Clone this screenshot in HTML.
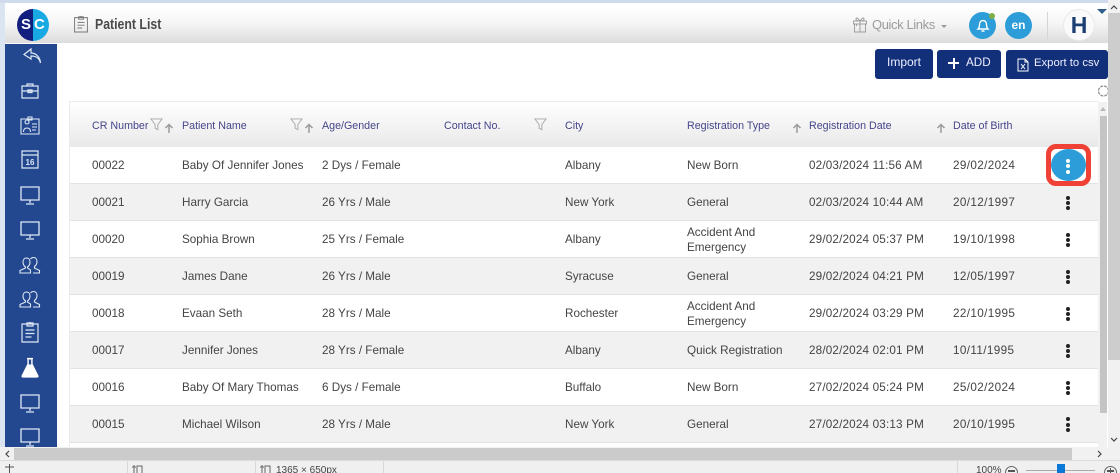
<!DOCTYPE html>
<html lang="en">
<head>
<meta charset="utf-8">
<title>Patient List</title>
<style>
html,body{margin:0;padding:0;width:1120px;height:473px;overflow:hidden;background:#fff}
body{position:relative;font-family:"Liberation Sans",sans-serif;font-size:11.7px;color:#444}
div,span,svg{position:absolute}
.t{white-space:nowrap;line-height:14px}
.c{margin-top:1px}
.a{letter-spacing:.38px}
.b{letter-spacing:.17px}
.h{color:#45458a;font-size:10.7px;line-height:14px;white-space:nowrap;top:119px}
.row{left:70px;width:1028px;height:36px;border-bottom:1px solid #e2e2e2}
.g{background:#f1f1f1}
.btn{background:#12307a;border-radius:3px;color:#eef;font-size:12px;line-height:14px;white-space:nowrap}
.d{width:4px;height:4px;border-radius:50%;background:#222;left:1066px}
.st{color:#444;font-size:10px;line-height:12px;white-space:nowrap}
</style>
</head>
<body>
<svg width="0" height="0" style="left:0;top:0">
<defs>
<symbol id="mon" viewBox="0 0 22 22"><path d="M2 3h18v13H2zM11 16v3M7 20h8" fill="none" stroke="#dfe8f5" stroke-width="1.3"/></symbol>
<symbol id="ppl" viewBox="0 0 22 22"><path d="M6.500 13c-1.500-1-2.500-3-2.500-5 0-2.500 1.500-4 3.500-4s3.500 1.500 3.500 4c0 2-1 4-2.500 5v1l3 2v3H1v-2.500l5.500-2.500zM11.500 5c.8-1 1.800-1.500 3-1.500 2 0 3.500 1.500 3.500 4 0 2-1 4-2.500 5v1.500l5 2.500v2.500H14" fill="none" stroke="#dfe8f5" stroke-width="1.1"/></symbol>
<symbol id="clip" viewBox="0 0 20 24"><path d="M2 4h16v18H2zM7 4V3h2.200a1 1 0 0 1 1.600 0H13v3H7zM5.500 10h9M5.500 13.500h9M5.500 17h6" fill="none" stroke="currentColor" stroke-width="1.2"/></symbol>
<symbol id="fil" viewBox="0 0 14 14"><path d="M1 1h12L8.500 7v5.500l-3-1.500V7z" fill="none" stroke="#a8a8a8" stroke-width="1"/></symbol>
<symbol id="up" viewBox="0 0 10 10"><path d="M5 10V2M1.500 5L5 1.500 8.500 5" fill="none" stroke="#9b9b9b" stroke-width="1.500"/></symbol>
</defs>
</svg>

<!-- window frame -->
<div style="left:0;top:0;width:1120px;height:3px;background:#cfdaea"></div>
<div style="left:0;top:3px;width:5px;height:444px;background:#dbe5f1"></div>

<!-- top bar -->
<div style="left:5px;top:6px;width:1103px;height:37px;background:linear-gradient(#fff 0%,#f6f6f6 45%,#dcdcdc 100%)"></div>
<div style="left:17px;top:9px;width:32px;height:32px;border-radius:50%;overflow:hidden;background:linear-gradient(90deg,#131f7f 0 50%,#19a9e2 50% 100%)"></div>
<div style="left:21px;top:17px;color:#fff;font-weight:bold;font-size:15px;line-height:16px">S</div>
<div style="left:34px;top:17px;color:#fff;font-weight:bold;font-size:15px;line-height:16px">C</div>
<svg width="16" height="20" style="left:73px;top:14px;color:#777"><use href="#clip" width="16" height="20"/></svg>
<div class="t" style="left:95px;top:16px;font-size:15px;line-height:17px;font-weight:bold;color:#4a4a4a;transform:scaleX(.82);transform-origin:0 0">Patient List</div>

<svg width="16" height="17" viewBox="0 0 16 17" style="left:852px;top:16px"><path d="M1.500 5h13v3h-13zM2.500 8h11v8h-11zM8 5v11M4.500 8v2M8 5C6 2 4 1 4 3s2 2 4 2c2 0 4 0 4-2S10 2 8 5" fill="none" stroke="#9f9f9f" stroke-width="1"/></svg>
<div class="t" style="left:872px;top:17px;font-size:13px;line-height:16px;color:#9c9c9c;letter-spacing:-.4px">Quick Links</div>
<div style="left:941px;top:25px;width:0;height:0;border:3px solid transparent;border-top:3px solid #999"></div>

<div style="left:969px;top:12px;width:27px;height:27px;border-radius:50%;background:#2c9dd8"></div>
<svg width="14" height="15" viewBox="0 0 14 15" style="left:976px;top:18px"><path d="M2 11c1-1 1.500-2 1.500-4.500C3.500 4 5 2.500 7 2.500s3.500 1.500 3.500 4C10.500 9 11 10 12 11zM5.500 13h3" fill="none" stroke="#fff" stroke-width="1.400"/></svg>
<div style="left:989px;top:13px;width:6px;height:6px;border-radius:50%;background:#7fae45"></div>
<div style="left:1005px;top:12px;width:27px;height:27px;border-radius:50%;background:#2c9dd8;color:#fff;font-weight:bold;font-size:12px;line-height:26px;text-align:center">en</div>
<div style="left:1047px;top:12px;width:1px;height:27px;background:#d5d5d5"></div>
<div style="left:1063px;top:9px;width:32px;height:32px;border-radius:50%;background:#fafafa;border:1px solid #e9e9e9;box-sizing:border-box;color:#1c3f73;font-weight:bold;font-size:23px;line-height:30px;text-align:center">H</div>
<div style="left:1097px;top:9px;width:0;height:0;border-left:5px solid transparent;border-right:5px solid transparent;border-top:5px solid #2e5d8c"></div>

<!-- sidebar -->
<div style="left:5px;top:44px;width:52px;height:403px;background:#23488f"></div>
<svg width="20" height="17" viewBox="0 0 20 17" style="left:22px;top:48px"><path d="M9 1L2 6.500 9 11V8c4 0 8 1 9.500 7C18 9 14 5 9 5z" fill="none" stroke="#dfe8f5" stroke-width="1.200"/></svg>
<svg width="18" height="17" viewBox="0 0 18 17" style="left:21px;top:82px"><path d="M1 4h16v12H1zM6 4V2h6v2M1 9h16M7 8h4v2.500H7z" fill="none" stroke="#dfe8f5" stroke-width="1.200"/></svg>
<svg width="20" height="19" viewBox="0 0 20 19" style="left:20px;top:116px"><path d="M1 3h18v15H1zM8 3V1h4v3H8zM7 8a2 2 0 1 1 .01 0M3.500 16c0-3 1.500-4 3.500-4s3.500 1 3.500 4M12 8h5M12 11h5M12 14h4" fill="none" stroke="#dfe8f5" stroke-width="1.100"/></svg>
<svg width="18" height="19" viewBox="0 0 18 19" style="left:21px;top:150px"><path d="M1 1h16v17H1zM1 5h16" fill="none" stroke="#dfe8f5" stroke-width="1.200"/><text x="9" y="15" font-size="8" font-weight="bold" font-family="Liberation Sans" fill="#dfe8f5" text-anchor="middle">16</text></svg>
<svg width="22" height="22" style="left:19px;top:184px"><use href="#mon" width="22" height="22"/></svg>
<svg width="22" height="22" style="left:19px;top:219px"><use href="#mon" width="22" height="22"/></svg>
<svg width="22" height="22" style="left:19px;top:254px"><use href="#ppl" width="22" height="22"/></svg>
<svg width="22" height="22" style="left:19px;top:288px"><use href="#ppl" width="22" height="22"/></svg>
<svg width="20" height="24" style="left:20px;top:320px;color:#dfe8f5"><use href="#clip" width="20" height="24"/></svg>
<svg width="20" height="21" viewBox="0 0 20 21" style="left:20px;top:357px"><path d="M7 1.500h6M8 1.500V7L2 19a1 1 0 0 0 1 1h14a1 1 0 0 0 1-1L12 7V1.500" fill="#fff" stroke="#fff" stroke-width="1.200"/><path d="M8.800 2.500h2.400v5H8.800z" fill="#23488f"/></svg>
<svg width="22" height="22" style="left:19px;top:392px"><use href="#mon" width="22" height="22"/></svg>
<svg width="22" height="22" style="left:19px;top:426px"><use href="#mon" width="22" height="22"/></svg>

<!-- buttons -->
<div class="btn" style="left:875px;top:49px;width:58px;height:30px;line-height:27px;text-align:center">Import</div>
<div class="btn" style="left:937px;top:50px;width:64px;height:28px">
  <span style="left:11px;top:12px;width:11px;height:2px;background:#fff"></span>
  <span style="left:15.500px;top:8px;width:2px;height:11px;background:#fff"></span>
  <span style="left:29px;top:6px;font-size:11.700px">ADD</span>
</div>
<div class="btn" style="left:1006px;top:50px;width:102px;height:29px">
  <svg width="12" height="14" viewBox="0 0 12 14" style="left:11px;top:8px"><path d="M1 1h7l3 3v9H1zM8 1v3h3M4 6l4 5M8 6l-4 5" fill="none" stroke="#fff" stroke-width="1"/></svg>
  <span style="left:28px;top:6px;white-space:nowrap;font-size:11.300px">Export to csv</span>
</div>

<!-- small gear -->
<svg width="12" height="16" viewBox="0 0 12 16" style="left:1097px;top:83px"><circle cx="6.500" cy="8" r="5" fill="none" stroke="#8a8a8a" stroke-width="1.200" stroke-dasharray="3 1"/></svg>

<!-- table -->
<div style="left:69px;top:101px;width:1px;height:346px;background:#ececec"></div>
<div style="left:70px;top:101px;width:1028px;height:1px;background:#ececec"></div>
<div style="left:70px;top:102px;width:1028px;height:45px;background:linear-gradient(#fff,#e9e9e9)"></div>
<div class="h" style="left:92px">CR Number</div>
<svg width="13" height="13" style="left:150px;top:118px"><use href="#fil" width="13" height="13"/></svg>
<svg width="10" height="10" style="left:164px;top:123px"><use href="#up" width="10" height="10"/></svg>
<div class="h" style="left:182px">Patient Name</div>
<svg width="13" height="13" style="left:290px;top:118px"><use href="#fil" width="13" height="13"/></svg>
<svg width="10" height="10" style="left:304px;top:123px"><use href="#up" width="10" height="10"/></svg>
<div class="h" style="left:322px">Age/Gender</div>
<div class="h" style="left:444px">Contact No.</div>
<svg width="13" height="13" style="left:534px;top:118px"><use href="#fil" width="13" height="13"/></svg>
<div class="h" style="left:565px">City</div>
<div class="h" style="left:687px">Registration Type</div>
<svg width="10" height="10" style="left:792px;top:123px"><use href="#up" width="10" height="10"/></svg>
<div class="h" style="left:809px">Registration Date</div>
<svg width="10" height="10" style="left:936px;top:123px"><use href="#up" width="10" height="10"/></svg>
<div class="h" style="left:953px">Date of Birth</div>

<div class="row" style="top:147px"></div>
<div class="row g" style="top:184px"></div>
<div class="row" style="top:221px"></div>
<div class="row g" style="top:258px"></div>
<div class="row" style="top:295px"></div>
<div class="row g" style="top:332px"></div>
<div class="row" style="top:369px"></div>
<div class="row g" style="top:406px"></div>

<div class="t c" style="left:92px;top:158px">00022</div><div class="t c" style="left:182px;top:158px">Baby Of Jennifer Jones</div><div class="t c" style="left:322px;top:158px">2 Dys / Female</div><div class="t c" style="left:565px;top:158px">Albany</div><div class="t c" style="left:687px;top:158px">New Born</div><div class="t c b" style="left:809px;top:158px">02/03/2024 11:56 AM</div><div class="t c a" style="left:953px;top:158px">29/02/2024</div>
<div class="t c" style="left:92px;top:195px">00021</div><div class="t c" style="left:182px;top:195px">Harry Garcia</div><div class="t c" style="left:322px;top:195px">26 Yrs / Male</div><div class="t c" style="left:565px;top:195px">New York</div><div class="t c" style="left:687px;top:195px">General</div><div class="t c b" style="left:809px;top:195px">02/03/2024 10:44 AM</div><div class="t c a" style="left:953px;top:195px">20/12/1997</div>
<div class="t c" style="left:92px;top:232px">00020</div><div class="t c" style="left:182px;top:232px">Sophia Brown</div><div class="t c" style="left:322px;top:232px">25 Yrs / Female</div><div class="t c" style="left:565px;top:232px">Albany</div><div class="t c" style="left:687px;top:224px;line-height:15px">Accident And<br>Emergency</div><div class="t c b" style="left:809px;top:232px">29/02/2024 05:37 PM</div><div class="t c a" style="left:953px;top:232px">19/10/1998</div>
<div class="t c" style="left:92px;top:269px">00019</div><div class="t c" style="left:182px;top:269px">James Dane</div><div class="t c" style="left:322px;top:269px">26 Yrs / Male</div><div class="t c" style="left:565px;top:269px">Syracuse</div><div class="t c" style="left:687px;top:269px">General</div><div class="t c b" style="left:809px;top:269px">29/02/2024 04:21 PM</div><div class="t c a" style="left:953px;top:269px">12/05/1997</div>
<div class="t c" style="left:92px;top:306px">00018</div><div class="t c" style="left:182px;top:306px">Evaan Seth</div><div class="t c" style="left:322px;top:306px">28 Yrs / Male</div><div class="t c" style="left:565px;top:306px">Rochester</div><div class="t c" style="left:687px;top:298px;line-height:15px">Accident And<br>Emergency</div><div class="t c b" style="left:809px;top:306px">29/02/2024 03:29 PM</div><div class="t c a" style="left:953px;top:306px">22/10/1995</div>
<div class="t c" style="left:92px;top:343px">00017</div><div class="t c" style="left:182px;top:343px">Jennifer Jones</div><div class="t c" style="left:322px;top:343px">28 Yrs / Female</div><div class="t c" style="left:565px;top:343px">Albany</div><div class="t c" style="left:687px;top:343px">Quick Registration</div><div class="t c b" style="left:809px;top:343px">28/02/2024 02:01 PM</div><div class="t c a" style="left:953px;top:343px">10/11/1995</div>
<div class="t c" style="left:92px;top:380px">00016</div><div class="t c" style="left:182px;top:380px">Baby Of Mary Thomas</div><div class="t c" style="left:322px;top:380px">6 Dys / Female</div><div class="t c" style="left:565px;top:380px">Buffalo</div><div class="t c" style="left:687px;top:380px">New Born</div><div class="t c b" style="left:809px;top:380px">27/02/2024 05:24 PM</div><div class="t c a" style="left:953px;top:380px">25/02/2024</div>
<div class="t c" style="left:92px;top:417px">00015</div><div class="t c" style="left:182px;top:417px">Michael Wilson</div><div class="t c" style="left:322px;top:417px">28 Yrs / Male</div><div class="t c" style="left:565px;top:417px">New York</div><div class="t c" style="left:687px;top:417px">General</div><div class="t c b" style="left:809px;top:417px">27/02/2024 03:13 PM</div><div class="t c a" style="left:953px;top:417px">20/10/1995</div>

<!-- highlighted action -->
<div style="left:1046px;top:144px;width:45px;height:42px;box-sizing:border-box;border:5px solid #ef4136;border-radius:10px;background:#fff"></div>
<div style="left:1051px;top:149px;width:35px;height:32px;border-radius:50%;background:#2c9dd8"></div>
<div class="d" style="background:#fff;top:159px"></div><div class="d" style="background:#fff;top:164px"></div><div class="d" style="background:#fff;top:170px"></div>

<div class="d" style="top:196px"></div><div class="d" style="top:201px"></div><div class="d" style="top:206px"></div>
<div class="d" style="top:233px"></div><div class="d" style="top:238px"></div><div class="d" style="top:243px"></div>
<div class="d" style="top:270px"></div><div class="d" style="top:275px"></div><div class="d" style="top:280px"></div>
<div class="d" style="top:307px"></div><div class="d" style="top:312px"></div><div class="d" style="top:317px"></div>
<div class="d" style="top:344px"></div><div class="d" style="top:349px"></div><div class="d" style="top:354px"></div>
<div class="d" style="top:381px"></div><div class="d" style="top:386px"></div><div class="d" style="top:391px"></div>
<div class="d" style="top:417px"></div><div class="d" style="top:423px"></div><div class="d" style="top:428px"></div>

<!-- inner vertical scrollbar -->
<div style="left:1098px;top:102px;width:9px;height:345px;background:#f1f1f1"></div>
<div style="left:1107px;top:102px;width:1px;height:345px;background:#fff"></div>
<div style="left:1100px;top:116px;width:7px;height:297px;background:#c4c4c4"></div>
<div style="left:1100px;top:107px;width:0;height:0;border:3.500px solid transparent;border-bottom:4px solid #bbb;border-top:0"></div>

<!-- outer vertical scrollbar -->
<div style="left:1108px;top:0;width:12px;height:447px;background:#f1f1f1"></div>
<div style="left:1108px;top:13px;width:12px;height:347px;background:#cdcdcd"></div>
<svg width="8" height="6" viewBox="0 0 8 6" style="left:1110px;top:4px"><path d="M1 5l3-3 3 3" fill="none" stroke="#444" stroke-width="1.200"/></svg>
<svg width="8" height="6" viewBox="0 0 8 6" style="left:1110px;top:437px"><path d="M1 1l3 3 3-3" fill="none" stroke="#444" stroke-width="1.200"/></svg>

<!-- horizontal scrollbar -->
<div style="left:0;top:447px;width:1120px;height:13px;background:#f1f1f1"></div>
<div style="left:14px;top:448px;width:1058px;height:12px;background:#cbcbcb"></div>
<svg width="6" height="8" viewBox="0 0 6 8" style="left:4px;top:450px"><path d="M5 1L2 4l3 3" fill="none" stroke="#444" stroke-width="1.200"/></svg>
<svg width="6" height="8" viewBox="0 0 6 8" style="left:1097px;top:450px"><path d="M1 1l3 3-3 3" fill="none" stroke="#444" stroke-width="1.200"/></svg>

<!-- status bar -->
<div style="left:0;top:460px;width:1120px;height:13px;background:#f0f0f0;border-top:1px solid #dcdcdc;box-sizing:border-box"></div>
<div style="left:127px;top:461px;width:1px;height:12px;background:#d8d8d8"></div>
<div style="left:255px;top:461px;width:1px;height:12px;background:#d8d8d8"></div>
<div style="left:383px;top:461px;width:1px;height:12px;background:#d8d8d8"></div>
<div style="left:957px;top:461px;width:1px;height:12px;background:#d8d8d8"></div>
<svg width="11" height="9" viewBox="0 0 11 9" style="left:4px;top:464px"><path d="M5.500 0v9M1 3h9" fill="none" stroke="#555" stroke-width="1"/></svg>
<svg width="11" height="9" viewBox="0 0 11 9" style="left:132px;top:465px"><path d="M5 1h5v8H5zM2 0v9M0 2h4" fill="none" stroke="#666" stroke-width="1"/></svg>
<svg width="11" height="9" viewBox="0 0 11 9" style="left:260px;top:465px"><path d="M5 1h5v8H5zM2 0v9M0 2h4" fill="none" stroke="#666" stroke-width="1"/></svg>
<div class="st" style="left:276px;top:465px">1365 × 650px</div>
<div class="st" style="left:976px;top:465px">100%</div>
<div style="left:1005px;top:466px;width:11px;height:11px;border:1px solid #666;border-radius:50%"></div>
<div style="left:1008px;top:470px;width:7px;height:2px;background:#555"></div>
<div style="left:1026px;top:470px;width:69px;height:1px;background:#aaa"></div>
<div style="left:1057px;top:464px;width:8px;height:9px;background:#0a78d7"></div>
<div style="left:1104px;top:466px;width:11px;height:11px;border:1px solid #666;border-radius:50%"></div>
<div style="left:1107px;top:470px;width:7px;height:2px;background:#555"></div>
<div style="left:1110px;top:468px;width:1px;height:5px;background:#555"></div>
</body>
</html>
